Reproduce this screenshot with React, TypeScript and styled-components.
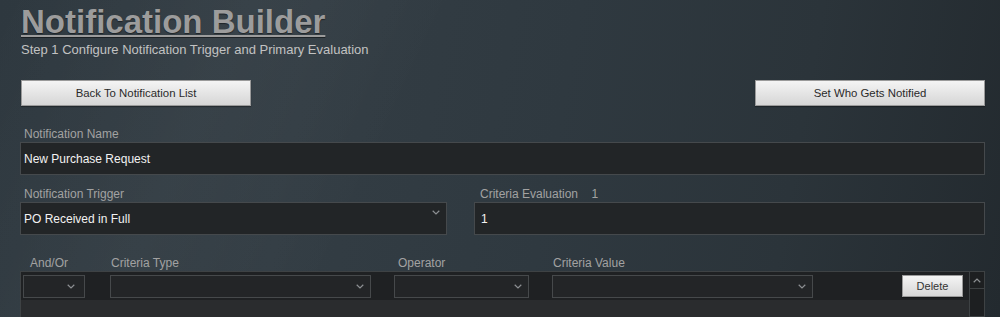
import styled, { createGlobalStyle } from "styled-components";

const GlobalStyle = createGlobalStyle`
  html, body {
    margin: 0;
    padding: 0;
  }
  body {
    font-family: "Liberation Sans", Arial, sans-serif;
    background: #2b343b;
  }
`;

const Page = styled.div`
  height: 317px;
  box-sizing: border-box;
  padding: 4px 15px 0 20px;
  overflow: hidden;
  display: flex;
  flex-direction: column;
  background:
    linear-gradient(115deg, rgba(255,255,255,0) 0%, rgba(255,255,255,0.03) 22%, rgba(255,255,255,0) 40%),
    linear-gradient(100deg, #2e383f 0%, #333d44 30%, #2f3940 55%, #2b343a 78%, #232a2f 100%);
`;

const Title = styled.h1`
  margin: 0 0 0 1px;
  font-size: 33px;
  line-height: 36px;
  font-weight: bold;
  color: #9c9c9c;
  text-decoration: underline;
  text-decoration-thickness: 2px;
  text-underline-offset: 2px;
  text-shadow: 0 1px 1px rgba(0, 0, 0, 0.45);
`;

const Subtitle = styled.div`
  margin: 2px 0 0 1px;
  font-size: 13px;
  line-height: 15px;
  color: #c2c2c2;
`;

const ButtonBar = styled.div`
  display: flex;
  justify-content: space-between;
  margin-top: 23px;
  padding-left: 1px;
`;

const LightButton = styled.button<{ $w: number; $h: number }>`
  width: ${(p) => p.$w}px;
  height: ${(p) => p.$h}px;
  padding: 0;
  border: 1px solid #9a9a9a;
  background: linear-gradient(#f4f4f4, #d6d6d6);
  color: #2a2a2a;
  font-family: "Liberation Sans", Arial, sans-serif;
  font-size: 11.4px;
  cursor: pointer;
  box-shadow: 0 1px 1px rgba(0, 0, 0, 0.3);
`;

const Field = styled.div`
  display: flex;
  flex-direction: column;
  min-width: 0;
`;

const Label = styled.label<{ $indent?: number }>`
  font-size: 12px;
  line-height: 14px;
  color: #a2a2a2;
  margin: 0 0 1px ${(p) => p.$indent ?? 4}px;
  white-space: pre;
`;

const TextBox = styled.div<{ $pad?: number }>`
  height: 33px;
  box-sizing: border-box;
  border: 1px solid #45494c;
  background: #222527;
  color: #f2f2f2;
  font-size: 12px;
  display: flex;
  align-items: center;
  padding: 0 ${(p) => p.$pad ?? 3}px;
  position: relative;
`;

const NameField = styled(Field)`
  margin-top: 21px;
`;

const TwoCol = styled.div`
  display: grid;
  grid-template-columns: 427px 1fr;
  column-gap: 27px;
  margin-top: 12px;
`;

const Chevron = ({ up }: { up?: boolean }) => (
  <svg width="8" height="5" viewBox="0 0 8 5" style={{ transform: up ? "rotate(180deg)" : undefined }}>
    <path d="M0.7 0.8 L4 4 L7.3 0.8" fill="none" stroke="#8c8f92" strokeWidth="1.2" />
  </svg>
);

const ChevronSlot = styled.span<{ $right: number; $top: number }>`
  position: absolute;
  right: ${(p) => p.$right}px;
  top: ${(p) => p.$top}px;
  display: flex;
`;

const CriteriaHead = styled.div`
  display: grid;
  grid-template-columns: 64px 261px 135px 261px;
  column-gap: 23px;
  margin-top: 21px;
  padding-left: 3px;
  font-size: 12px;
  line-height: 14px;
  color: #a2a2a2;
`;

const HeadCell = styled.span<{ $indent: number }>`
  padding-left: ${(p) => p.$indent}px;
`;

const TableWrap = styled.div`
  display: flex;
  margin-top: 1px;
  flex: 1;
  min-height: 0;
`;

const Table = styled.div`
  flex: 1;
  border-top: 1px solid #3e4244;
  border-left: 1px solid #3e4244;
  background: #2a2c2e;
`;

const Row = styled.div`
  display: grid;
  grid-template-columns: 64px 261px 135px 261px 1fr;
  column-gap: 23px;
  align-items: center;
  height: 28px;
  padding: 0 6px 0 2px;
  background: #1f2123;
`;

const SmallSelect = styled.div<{ $w?: number }>`
  width: ${(p) => (p.$w ? `${p.$w}px` : "auto")};
  height: 23px;
  box-sizing: border-box;
  border: 1px solid #46494b;
  background: #232527;
  position: relative;
`;

const DeleteButton = styled(LightButton)`
  justify-self: end;
  font-size: 11px;
  color: #333;
`;

const ScrollBar = styled.div`
  width: 16px;
  box-sizing: border-box;
  border: 1px solid #3e4244;
  background: #1d1f21;
`;

const ScrollUp = styled.div`
  height: 16px;
  border-bottom: 1px solid #3e4244;
  display: flex;
  align-items: center;
  justify-content: center;
`;

export default function App() {
  return (
    <>
      <GlobalStyle />
      <Page>
        <Title>Notification Builder</Title>
        <Subtitle>Step 1 Configure Notification Trigger and Primary Evaluation</Subtitle>

        <ButtonBar>
          <LightButton $w={230} $h={26}>Back To Notification List</LightButton>
          <LightButton $w={230} $h={26}>Set Who Gets Notified</LightButton>
        </ButtonBar>

        <NameField>
          <Label>Notification Name</Label>
          <TextBox>New Purchase Request</TextBox>
        </NameField>

        <TwoCol>
          <Field>
            <Label>Notification Trigger</Label>
            <TextBox>
              PO Received in Full
              <ChevronSlot $right={6} $top={7}><Chevron /></ChevronSlot>
            </TextBox>
          </Field>
          <Field>
            <Label $indent={6}>{"Criteria Evaluation    1"}</Label>
            <TextBox $pad={6}>1</TextBox>
          </Field>
        </TwoCol>

        <CriteriaHead>
          <HeadCell $indent={7}>And/Or</HeadCell>
          <HeadCell $indent={1}>Criteria Type</HeadCell>
          <HeadCell $indent={4}>Operator</HeadCell>
          <HeadCell $indent={1}>Criteria Value</HeadCell>
        </CriteriaHead>

        <TableWrap>
          <Table>
            <Row>
              <SmallSelect $w={62}>
                <ChevronSlot $right={9} $top={8}><Chevron /></ChevronSlot>
              </SmallSelect>
              <SmallSelect>
                <ChevronSlot $right={6} $top={8}><Chevron /></ChevronSlot>
              </SmallSelect>
              <SmallSelect>
                <ChevronSlot $right={6} $top={8}><Chevron /></ChevronSlot>
              </SmallSelect>
              <SmallSelect>
                <ChevronSlot $right={6} $top={8}><Chevron /></ChevronSlot>
              </SmallSelect>
              <DeleteButton $w={61} $h={22}>Delete</DeleteButton>
            </Row>
          </Table>
          <ScrollBar>
            <ScrollUp><Chevron up /></ScrollUp>
          </ScrollBar>
        </TableWrap>
      </Page>
    </>
  );
}
